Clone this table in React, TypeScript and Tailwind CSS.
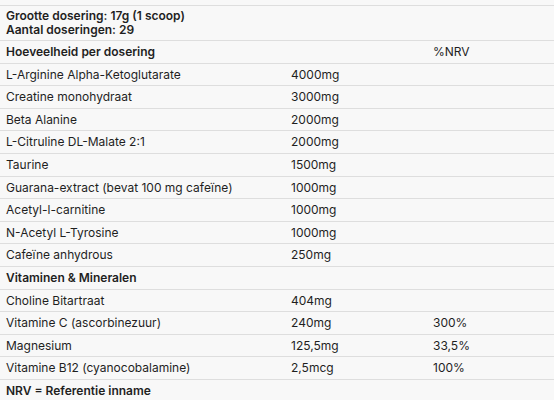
import React from 'react';

type Row = { name: string; amount?: string; nrv?: string; bold?: boolean };

const rows: Row[] = [
    { name: 'Hoeveelheid per dosering', nrv: '%NRV', bold: true },
    { name: 'L-Arginine Alpha-Ketoglutarate', amount: '4000mg' },
    { name: 'Creatine monohydraat', amount: '3000mg' },
    { name: 'Beta Alanine', amount: '2000mg' },
    { name: 'L-Citruline DL-Malate 2:1', amount: '2000mg' },
    { name: 'Taurine', amount: '1500mg' },
    { name: 'Guarana-extract (bevat 100 mg cafeïne)', amount: '1000mg' },
    { name: 'Acetyl-l-carnitine', amount: '1000mg' },
    { name: 'N-Acetyl L-Tyrosine', amount: '1000mg' },
    { name: 'Cafeïne anhydrous', amount: '250mg' },
    { name: 'Vitaminen & Mineralen', bold: true },
    { name: 'Choline Bitartraat', amount: '404mg' },
    { name: 'Vitamine C (ascorbinezuur)', amount: '240mg', nrv: '300%' },
    { name: 'Magnesium', amount: '125,5mg', nrv: '33,5%' },
    { name: 'Vitamine B12 (cyanocobalamine)', amount: '2,5mcg', nrv: '100%' },
    { name: 'NRV = Referentie inname', bold: true },
];

export default function App() {
    return (
        <div className="w-[554px] h-[400px] overflow-hidden bg-[#f8f8f8] pt-[5px] text-[#1f1f1f] font-['Inter',sans-serif] text-[12px]">
            <table className="w-full table-fixed border-collapse">
                <colgroup>
                    <col className="w-[285px]" />
                    <col className="w-[142px]" />
                    <col className="w-[127px]" />
                </colgroup>
                <tbody>
                    <tr className="border-t border-[#dedede]">
                        <td colSpan={3} className="px-[6px] py-[3px] leading-[14px] font-semibold">
                            Grootte dosering: 17g (1 scoop)
                            <br />
                            Aantal doseringen: 29
                        </td>
                    </tr>
                    {rows.map((r) => (
                        <tr key={r.name} className="border-t border-[#dedede]">
                            <td className={`px-[6px] py-[3px] leading-[15.6px] whitespace-nowrap ${r.bold ? 'font-semibold' : ''}`}>{r.name}</td>
                            <td className="px-[6px] py-[3px] leading-[15.6px]">{r.amount}</td>
                            <td className="px-[6px] py-[3px] leading-[15.6px]">{r.nrv}</td>
                        </tr>
                    ))}
                </tbody>
            </table>
        </div>
    );
}
